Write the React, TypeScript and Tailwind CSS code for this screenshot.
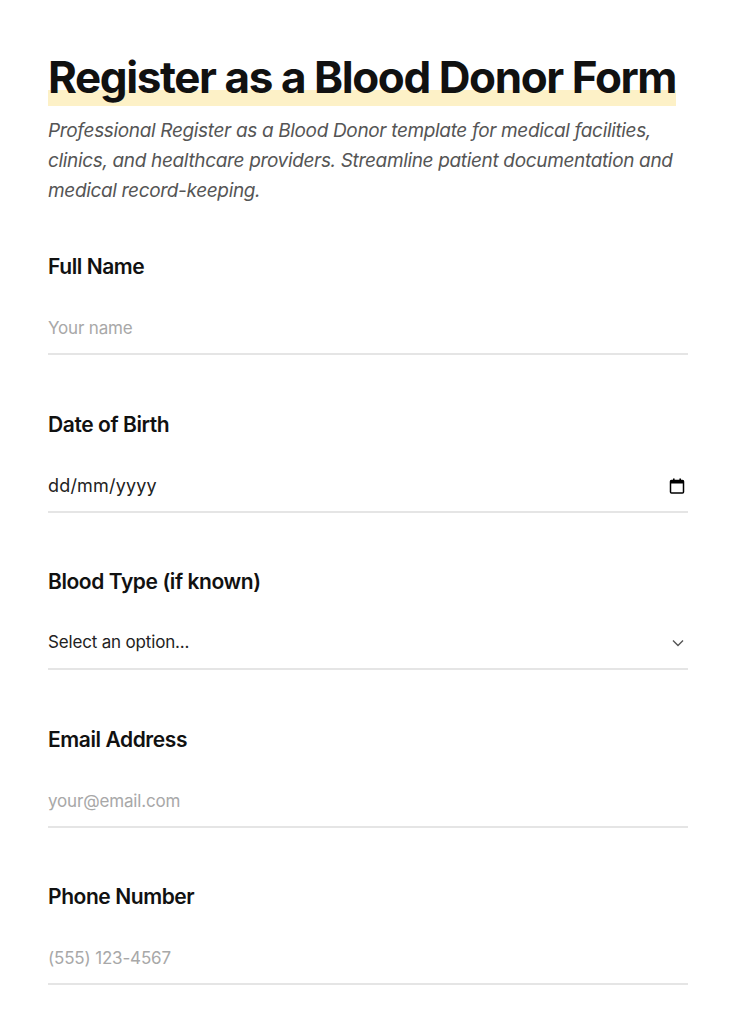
import { useState } from "react";

const font = { fontFamily: "Inter, 'Liberation Sans', sans-serif" };

function Label({ children, htmlFor }: { children: React.ReactNode; htmlFor: string }) {
  return (
    <label htmlFor={htmlFor} className="block text-[21px] leading-7 font-semibold tracking-[-0.02em] text-[#111]">
      {children}
    </label>
  );
}

function CalendarIcon() {
  return (
    <svg width="16" height="16" viewBox="0 0 16 16" className="text-black">
      <rect x="4" y="0.5" width="1.6" height="3" fill="currentColor" />
      <rect x="10.4" y="0.5" width="1.6" height="3" fill="currentColor" />
      <rect x="1.5" y="2.5" width="13" height="12.5" rx="1" fill="none" stroke="currentColor" strokeWidth="1.5" />
      <rect x="1.5" y="2.5" width="13" height="3" fill="currentColor" />
    </svg>
  );
}

export default function App() {
  const [blood, setBlood] = useState("");
  const inputCls =
    "w-full h-[52px] bg-transparent border-0 border-b-2 border-[#e5e5e5] text-[17px] text-[#222] placeholder:text-[#a8a8a8] outline-none tracking-[-0.01em]";

  return (
    <div className="min-h-screen bg-white" style={font}>
      <div className="px-12 pt-[49px] pb-10">
        <h1 className="text-[44px] leading-[56px] font-bold tracking-[-0.032em] text-[#111]">
          <span className="bg-[linear-gradient(to_bottom,transparent_72%,#fdf1c7_72%)] pb-[2px]">
            Register as a Blood Donor Form
          </span>
        </h1>
        <p className="mt-[11px] text-[19px] leading-[30px] italic text-[#555] tracking-[-0.018em]">
          Professional Register as a Blood Donor template for medical facilities, clinics, and healthcare providers.
          Streamline patient documentation and medical record-keeping.
        </p>

        <form className="mt-[47px] flex flex-col gap-[55.5px]">
          <div>
            <Label htmlFor="name">Full Name</Label>
            <input id="name" type="text" placeholder="Your name" className={`${inputCls} mt-[22px]`} />
          </div>

          <div>
            <Label htmlFor="dob">Date of Birth</Label>
            <div className="mt-[22px] flex items-center h-[52px] border-b-2 border-[#e5e5e5]">
              <input
                id="dob"
                type="text"
                readOnly
                value="dd/mm/yyyy"
                className="flex-1 bg-transparent border-0 text-[18px] text-[#222] outline-none tracking-[0.01em]"
              />
              <span className="mr-[3px]">
                <CalendarIcon />
              </span>
            </div>
          </div>

          <div>
            <Label htmlFor="blood">Blood Type (if known)</Label>
            <div className="relative mt-[22px]">
              <select
                id="blood"
                value={blood}
                onChange={(e) => setBlood(e.target.value)}
                className={`${inputCls} appearance-none pr-8`}
              >
                <option value="">Select an option...</option>
                <option>A+</option>
                <option>A-</option>
                <option>B+</option>
                <option>B-</option>
                <option>AB+</option>
                <option>AB-</option>
                <option>O+</option>
                <option>O-</option>
                <option>Unknown</option>
              </select>
              <svg
                width="12"
                height="8"
                viewBox="0 0 12 8"
                className="absolute right-[4px] top-[21px] pointer-events-none"
              >
                <path d="M1 1.5 L6 6.5 L11 1.5" fill="none" stroke="#555" strokeWidth="1.4" />
              </svg>
            </div>
          </div>

          <div>
            <Label htmlFor="email">Email Address</Label>
            <input id="email" type="email" placeholder="your@email.com" className={`${inputCls} mt-[22px]`} />
          </div>

          <div>
            <Label htmlFor="phone">Phone Number</Label>
            <input id="phone" type="tel" placeholder="(555) 123-4567" className={`${inputCls} mt-[22px]`} />
          </div>
        </form>
      </div>
    </div>
  );
}
